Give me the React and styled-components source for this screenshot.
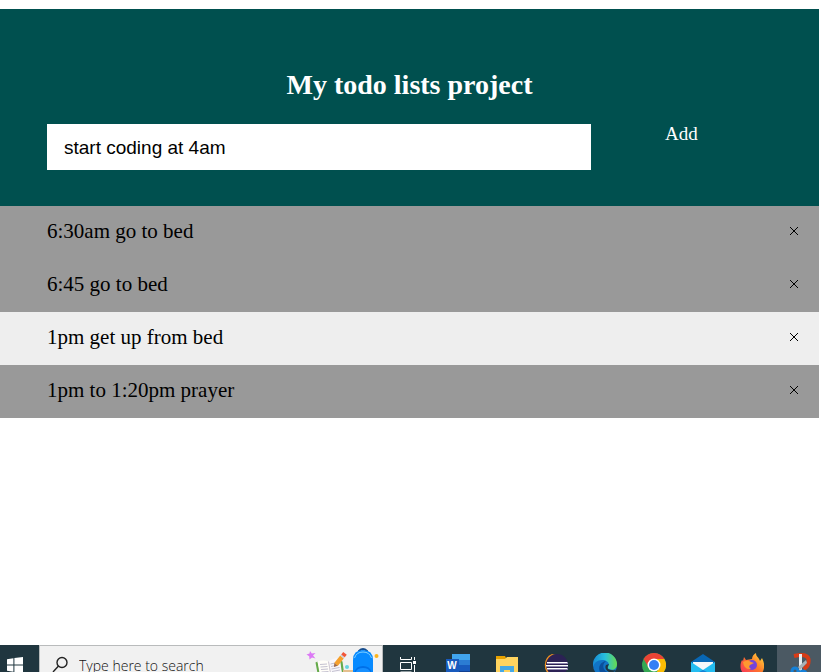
import React, { useState } from "react";
import styled, { createGlobalStyle } from "styled-components";

const GlobalStyle = createGlobalStyle`
  * { box-sizing: border-box; }
  body {
    margin: 0;
    background: #fff;
    color: #000;
    font-family: "Liberation Serif", "Times New Roman", serif;
  }
`;

const Page = styled.div`
  display: flex;
  flex-direction: column;
  min-height: 100vh;
`;

const Main = styled.main`
  flex: 1;
  padding: 9px 2px 0 0;
`;

const Header = styled.header`
  padding: 36px 47px;
  background: #00504f;
  color: #fff;
`;

const Title = styled.h1`
  margin: 24px 0;
  font-size: 28px;
  line-height: 31px;
  text-align: center;
`;

const Form = styled.form`
  display: flex;
  align-items: flex-start;
`;

const TaskInput = styled.input`
  flex: 0 0 75%;
  min-width: 0;
  height: 46px;
  padding: 2px 17px 0;
  border: 0;
  border-radius: 0;
  outline: 0;
  background: #fff;
  color: #000;
  font-family: "Liberation Sans", Arial, sans-serif;
  font-size: 19px;
`;

const AddButton = styled.button`
  flex: 0 0 25%;
  padding: 0;
  border: 0;
  background: transparent;
  color: #fff;
  font-family: inherit;
  font-size: 19px;
  line-height: 20px;
  cursor: pointer;
`;

const List = styled.ul`
  margin: 0;
  padding: 0;
  list-style: none;
`;

const Item = styled.li`
  display: flex;
  align-items: center;
  justify-content: space-between;
  min-height: 53px;
  padding: 0 16px 3px 47px;
  background: ${({ $light }) => ($light ? "#eee" : "#999")};
  font-size: 21px;
  line-height: 24px;
`;

const CloseButton = styled.button`
  display: flex;
  padding: 4px;
  border: 0;
  background: transparent;
  cursor: pointer;
`;

const Taskbar = styled.footer`
  display: flex;
  height: 27px;
  overflow: hidden;
  background: #20363f;
`;

const StartButton = styled.button`
  display: flex;
  align-items: flex-start;
  flex: 0 0 39px;
  height: 40px;
  padding: 12px 0 0 7px;
  border: 0;
  background: transparent;
`;

const Search = styled.label`
  display: flex;
  flex: 0 0 344px;
  height: 40px;
  padding-left: 12px;
  border: 1px solid #b9bbbc;
  background: #f1f1f1;
`;

const SearchIcon = styled.svg`
  flex: none;
  margin-top: 10px;
`;

const SearchInput = styled.input`
  flex: 1;
  min-width: 0;
  height: 38px;
  padding: 0 0 0 10px;
  border: 0;
  outline: 0;
  background: transparent;
  font-family: "Open Sans", "Segoe UI", sans-serif;
  font-size: 14px;
  font-weight: 300;
  &::placeholder { color: #111; opacity: 1; }
`;

const Apps = styled.nav`
  display: flex;
  flex: 1;
  justify-content: flex-end;
`;

const AppButton = styled.button`
  display: flex;
  align-items: flex-start;
  justify-content: center;
  flex: 0 0 49px;
  height: 40px;
  padding: 8px 2px 0 0;
  border: 0;
  background: transparent;

  &:last-child {
    flex-basis: 44px;
    padding: 8px 0 0 6px;
    background: #4b5963;
  }
`;

const CloseIcon = () => (
  <svg width="10" height="10" viewBox="0 0 10 10" aria-hidden="true">
    <path d="M1 1 9 9M9 1 1 9" stroke="#000" fill="none" />
  </svg>
);

const WindowsIcon = () => (
  <svg width="16" height="16" viewBox="0 0 16 16" aria-hidden="true">
    <path fill="#fff" d="M0 2.2 6.4 1.2V7.5H0ZM7.4 1 16 0V7.5H7.4ZM0 8.5H6.4V14.8L0 13.8ZM7.4 8.5H16V16L7.4 15Z" />
  </svg>
);

const Artwork = () => (
  <svg width="76" height="30" viewBox="306 646 76 30" aria-hidden="true">
    <path fill="#dc79f5" d="m310 651 1.800 2.500 3.700-.5-2.500 2.500 2.500 3-3.500-1-2.500 2-.3-3.300-2.700-1.600 3-1Z" />
    <path fill="#65aa4b" d="m315.500 662.500 2-1 4 14.500h-3.500ZM340 660l2.500 1.500 2 14.500h-3Z" />
    <path fill="#fffdf8" d="m317.500 661.500q6-2 11 0l2.500 14.500h-11Z" />
    <path fill="#f8f6fa" d="M328.500 661.500q5-4 11-3.500l3 18h-11.500Z" />
    <path stroke="#c4c1d0" fill="none" d="m320 664.500 7-.5m-6.500 3 7-.5m-6.500 3 7-.5m-6.500 3 7-.5M330.500 664l7-1.500m-6.500 4 7-1.500m-6.500 4 8-1.500m-7.500 4 8-1.500" />
    <path fill="#cdc6d0" d="m328 661.500 1 0 2.500 14.500h-1Z" />
    <path stroke="#f5a02c" strokeWidth="4.500" d="m336 664.500 6-7.500" />
    <path stroke="#cdd3db" strokeWidth="4.500" d="m342 657 1-1.200" />
    <path stroke="#f25638" strokeWidth="4.500" d="m343 655.800 2-2.500" />
    <path fill="#9e6746" d="m334 667 .3-4 3.400 2.800Z" />
    <circle cx="347" cy="667" r="2" fill="#66d3df" />
    <path fill="#e5bf8e" d="M343 670h11v6h-11z" />
    <path fill="none" stroke="#174d8d" strokeWidth="2" d="M359 653v-2q4-4 8 0v2" />
    <path fill="#078aff" d="M353 676v-16q0-10 10-10t10 10v16Z" />
    <path fill="none" stroke="#81d1ff" d="M354.500 658q2-6 8.500-6t8.500 6" />
    <path fill="#0070e8" d="M354 676q0-10 9-10t9 10Z" />
    <path fill="#168fff" d="M355 676q0-8 8-8t8 8Z" />
    <circle cx="376.500" cy="656" r="2" fill="#ffb41b" />
  </svg>
);

const TaskViewIcon = () => (
  <svg width="18" height="24" viewBox="0 0 18 24" aria-hidden="true">
    <g fill="none" stroke="#fff">
      <path d="M.5 4v2.500h11V4M.5 9.500h11v7h-11ZM.5 21v-2h11v2M14.500 4v3M14.500 12v9" />
    </g>
    <path fill="#fff" d="M13 8h3v3h-3z" />
  </svg>
);

const WordIcon = () => (
  <svg width="24" height="24" viewBox="0 0 24 24" aria-hidden="true">
    <path fill="#41a5ee" d="M6 1h18v6H6z" />
    <path fill="#2b7cd3" d="M6 7h18v5H6z" />
    <path fill="#185abd" d="M6 12h18v6H6z" />
    <path fill="#103f91" d="M6 18h18v5H6z" />
    <path fill="#185abd" d="M0 6h13v13H0z" />
    <text x="6" y="16" textAnchor="middle" fill="#fff" fontFamily="Liberation Sans, sans-serif" fontSize="10" fontWeight="700">W</text>
  </svg>
);

const FolderIcon = () => (
  <svg width="22" height="24" viewBox="0 0 22 24" aria-hidden="true">
    <path fill="#e6a100" d="M0 3h9l1 2h11v4H0Z" />
    <path fill="#ffd45f" d="M0 6h9l2-2h11v18H0Z" />
    <path fill="#46a8e3" d="M4 22v-9h14v9h-4v-5H8v5Z" />
  </svg>
);

const EclipseIcon = () => (
  <svg width="24" height="24" viewBox="0 0 24 24" aria-hidden="true">
    <path fill="#f7941e" d="M8 1a12 12 0 0 0 0 22l4-2V2Z" />
    <circle cx="13" cy="12" r="11" fill="#2c2255" />
    <path stroke="#8f86ae" strokeWidth="2" d="M3 10h21M2 13h22M3 16h21" />
    <path stroke="#fff" d="M3 9.500h20M2 12.500h22M3 15.500h20" />
  </svg>
);

const EdgeIcon = () => (
  <svg width="24" height="24" viewBox="0 0 24 24" aria-hidden="true">
    <defs>
      <linearGradient id="edge-top" x1="0" x2="1">
        <stop stopColor="#168ad5" /><stop offset=".5" stopColor="#28bfdd" /><stop offset="1" stopColor="#68dc4d" />
      </linearGradient>
    </defs>
    <circle cx="12" cy="12" r="12" fill="#1174c6" />
    <path fill="url(#edge-top)" d="M0 12a12 12 0 0 1 24-1c0 5-4 7-8 5-2-1-1-2 0-4 0-3-3-5-7-5-5 0-8 3-9 7Z" />
    <path fill="#0b4f9b" d="M8 21c-4-6-1-12 5-13-5 4-3 11 5 12l4-1c-3 5-10 6-14 2Z" />
    <path fill="#20363f" d="M13 12q-2 4 3 7 5 1 7-2-4 1-8-1-1-2 1-5Z" />
  </svg>
);

const ChromeIcon = () => (
  <svg width="24" height="24" viewBox="0 0 24 24" aria-hidden="true">
    <circle cx="12" cy="12" r="12" fill="#34a853" />
    <path fill="#ea4335" d="M1.600 6A12 12 0 0 1 22.400 6H12v6L7 15Z" />
    <path fill="#fbbc05" d="M12 6h10.400A12 12 0 0 1 12 24l5-9-5-9Z" />
    <circle cx="12" cy="12" r="6.500" fill="#fff" />
    <circle cx="12" cy="12" r="5" fill="#347ff5" />
  </svg>
);

const MailIcon = () => (
  <svg width="24" height="24" viewBox="0 0 24 24" aria-hidden="true">
    <path fill="#0867b5" d="M12 1 24 9v3H0V9Z" />
    <path fill="#f5f7fa" d="M2 9h20v8H2z" />
    <path fill="#24bdf1" d="m0 9 12 8 12-8v14H0Z" />
    <path fill="#1583d6" d="m0 23 12-6 12 6Z" />
  </svg>
);

const FirefoxIcon = () => (
  <svg width="24" height="24" viewBox="0 0 24 24" aria-hidden="true">
    <defs>
      <linearGradient id="fox" x1="0" y1="1" x2="1" y2="0">
        <stop stopColor="#f62865" /><stop offset=".55" stopColor="#ff772a" /><stop offset="1" stopColor="#ffe63e" />
      </linearGradient>
    </defs>
    <path fill="url(#fox)" d="M4 4l2 3 6-1c0-3 2-5 4-6 0 4 3 4 4 8l2-3c5 9 1 19-9 19C2 24-2 15 2 7l1 1Z" />
    <circle cx="12" cy="12" r="5" fill="#7542dc" />
    <path fill="#ff9830" d="M3 9q5-3 8 0l3 1-4 2q-2 2 1 4Q4 17 3 9Z" />
  </svg>
);

const SnipIcon = () => (
  <svg width="24" height="24" viewBox="0 0 24 24" aria-hidden="true">
    <path fill="none" stroke="#d83b16" strokeWidth="4" d="M4 3q13-3 14.500 3 1 7-5 10" />
    <path fill="#e8edf0" d="m9 1 3 0v18l-3-2Z" />
    <path fill="#aab2b7" d="m16 7 1 3-7 7-2-3Z" />
    <circle cx="5" cy="18" r="3" fill="none" stroke="#1581d8" strokeWidth="3" />
    <circle cx="13" cy="21" r="3" fill="none" stroke="#1581d8" strokeWidth="3" />
  </svg>
);

const apps = [
  ["Task View", TaskViewIcon],
  ["Word", WordIcon],
  ["File Explorer", FolderIcon],
  ["Eclipse", EclipseIcon],
  ["Edge", EdgeIcon],
  ["Chrome", ChromeIcon],
  ["Mail", MailIcon],
  ["Firefox", FirefoxIcon],
  ["Snipping Tool", SnipIcon],
];

const initialTasks = ["6:30am go to bed", "6:45 go to bed", "1pm get up from bed", "1pm to 1:20pm prayer"];

export default function App() {
  const [tasks, setTasks] = useState(initialTasks);
  const [draft, setDraft] = useState("start coding at 4am");

  const addTask = (event) => {
    event.preventDefault();
    if (!draft.trim()) return;
    setTasks([...tasks, draft.trim()]);
    setDraft("");
  };

  return (
    <Page>
      <GlobalStyle />
      <Main>
        <Header>
          <Title>My todo lists project</Title>
          <Form onSubmit={addTask}>
            <TaskInput aria-label="New task" value={draft} onChange={(e) => setDraft(e.target.value)} />
            <AddButton type="submit">Add</AddButton>
          </Form>
        </Header>
        <List>
          {tasks.map((task, index) => (
            <Item key={task} $light={index === 2}>
              {task}
              <CloseButton type="button" aria-label={`Remove ${task}`} onClick={() => setTasks(tasks.filter((t) => t !== task))}>
                <CloseIcon />
              </CloseButton>
            </Item>
          ))}
        </List>
      </Main>
      <Taskbar>
        <StartButton type="button" aria-label="Start"><WindowsIcon /></StartButton>
        <Search>
          <SearchIcon width="17" height="18" viewBox="0 0 17 18" aria-hidden="true">
            <circle cx="10" cy="6.500" r="5" fill="none" stroke="#222" strokeWidth="1.400" />
            <path d="M6.500 10 1 16" stroke="#222" strokeWidth="1.400" />
          </SearchIcon>
          <SearchInput type="text" aria-label="Search" placeholder="Type here to search" />
          <Artwork />
        </Search>
        <Apps aria-label="Taskbar apps">
          {apps.map(([name, Icon]) => (
            <AppButton key={name} type="button" aria-label={name}>
              <Icon />
            </AppButton>
          ))}
        </Apps>
      </Taskbar>
    </Page>
  );
}
